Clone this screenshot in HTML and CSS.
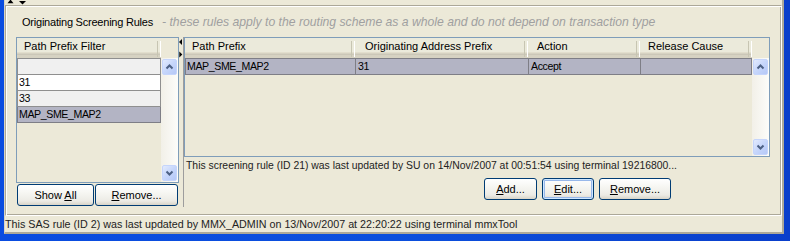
FILE: index.html
```html
<!DOCTYPE html>
<html>
<head>
<meta charset="utf-8">
<link rel="stylesheet" href="styles.css">
</head>
<body>
<div class="window">
  <div class="client">
    <div class="topbar">
      <svg class="toparrows" width="30" height="5" viewBox="0 0 30 5"><polygon points="2.5,3.2 5.5,-0.5 8.5,3.2" fill="#000"/><polygon points="14,1 21,1 17.5,4.6" fill="#000"/></svg>
    </div>
    <div class="panel">
      <div class="title"><span class="title-main">Originating Screening Rules</span><span class="title-note">- these rules apply to the routing scheme as a whole and do not depend on transaction type</span></div>
      <div class="content">
        <div class="left">
          <div class="table table-left">
            <div class="cols">
              <div class="thead"><div class="th c-filter">Path Prefix Filter</div></div>
              <div class="tbody">
                <div class="tr alt"><div class="td c-filter"></div></div>
                <div class="tr"><div class="td c-filter">31</div></div>
                <div class="tr alt"><div class="td c-filter">33</div></div>
                <div class="tr sel"><div class="td c-filter">MAP_SME_MAP2</div></div>
              </div>
            </div>
            <div class="vscroll">
              <div class="corner"></div>
              <div class="track">
                <div class="sbtn"><svg width="13" height="14" viewBox="0 0 13 14"><path d="M3.5 8.5 L6.5 5.5 L9.5 8.5" fill="none" stroke="#4D6185" stroke-width="2"/></svg></div>
                <div class="sfill"></div>
                <div class="sbtn"><svg width="13" height="14" viewBox="0 0 13 14"><path d="M3.5 5.5 L6.5 8.5 L9.5 5.5" fill="none" stroke="#4D6185" stroke-width="2"/></svg></div>
              </div>
            </div>
          </div>
          <div class="btnrow btnrow-left">
            <div class="btn b-showall">Show <u>A</u>ll</div>
            <div class="btn b-lremove"><u>R</u>emove...</div>
          </div>
        </div>
        <div class="splitter">
          <svg width="4" height="170" viewBox="0 0 4 170"><polygon points="3,2 3,8 0,5" fill="#000"/><polygon points="0.3,14.5 0.3,20.5 3.3,17.5" fill="#000"/></svg>
        </div>
        <div class="right">
          <div class="table table-right">
            <div class="cols">
              <div class="thead">
                <div class="th c-path">Path Prefix</div>
                <div class="th c-orig">Originating Address Prefix</div>
                <div class="th c-action">Action</div>
                <div class="th c-cause">Release Cause</div>
              </div>
              <div class="tbody">
                <div class="tr sel">
                  <div class="td c-path">MAP_SME_MAP2</div>
                  <div class="td c-orig">31</div>
                  <div class="td c-action">Accept</div>
                  <div class="td c-cause"></div>
                </div>
              </div>
            </div>
            <div class="vscroll">
              <div class="corner"></div>
              <div class="track">
                <div class="sbtn"><svg width="13" height="14" viewBox="0 0 13 14"><path d="M3.5 8.5 L6.5 5.5 L9.5 8.5" fill="none" stroke="#4D6185" stroke-width="2"/></svg></div>
                <div class="sfill"></div>
                <div class="sbtn"><svg width="13" height="14" viewBox="0 0 13 14"><path d="M3.5 5.5 L6.5 8.5 L9.5 5.5" fill="none" stroke="#4D6185" stroke-width="2"/></svg></div>
              </div>
            </div>
          </div>
          <div class="info">This screening rule (ID 21) was last updated by SU on 14/Nov/2007 at 00:51:54 using terminal 19216800...</div>
          <div class="btnrow btnrow-right">
            <div class="btn b-add"><u>A</u>dd...</div>
            <div class="btn b-edit focus"><u>E</u>dit...</div>
            <div class="btn b-rremove"><u>R</u>emove...</div>
          </div>
        </div>
      </div>
    </div>
    <div class="status">This SAS rule (ID 2) was last updated by MMX_ADMIN on 13/Nov/2007 at 22:20:22 using terminal mmxTool</div>
  </div>
</div>
</body>
</html>
```

FILE: styles.css
```css
* { box-sizing: border-box; }
html, body { margin: 0; padding: 0; }
body {
  width: 790px;
  height: 241px;
  overflow: hidden;
  font-family: "Liberation Sans", Arial, sans-serif;
  font-size: 11px;
  color: #000;
  background: #ECE9D8;
}
.window {
  width: 790px;
  height: 241px;
  display: flex;
  padding: 0 6px 7px 4px;
  background: linear-gradient(to right, #0A4CE0 0%, #0B4FDD 50%, #0A3FCB 100%);
}
.client {
  flex: 1;
  display: flex;
  flex-direction: column;
  background: #ECE9D8;
  border-right: 2px solid #ACA899;
  border-bottom: 2px solid #ACA899;
  border-left: 1px solid #D8D4C4;
}
.topbar {
  height: 5px;
  flex: none;
  overflow: hidden;
}
.toparrows { display: block; margin-left: 0; }
.panel {
  flex: none;
  height: 211px;
  border: 1px solid;
  border-color: #ACA899 #FFFFFF #FFFFFF #ACA899;
  box-shadow: inset 1px 1px 0 #FFFFFF, inset -1px -1px 0 #ACA899;
  padding: 9px 0 0 10px;
  display: flex;
  flex-direction: column;
}
.title {
  height: 14px;
  line-height: 14px;
  margin-bottom: 8px;
  padding-left: 6px;
  white-space: nowrap;
}
.title-main { font-size: 11px; letter-spacing: -0.22px; }
.title-note {
  font-style: italic;
  color: #A0A0A0;
  font-size: 12.2px;
  margin-left: 9px;
}
.content {
  display: flex;
  height: 170px;
}
.left {
  width: 163px;
  display: flex;
  flex-direction: column;
}
.table {
  border: 1px solid #7F9DB9;
  display: flex;
  background: #ECE9D8;
}
.table-left { height: 146px; }
.table-right { height: 120px; width: 586px; }
.cols {
  flex: 1;
  display: flex;
  flex-direction: column;
}
.thead {
  display: flex;
  height: 20px;
  flex: none;
}
.th {
  height: 20px;
  line-height: 17px;
  padding-left: 7px;
  white-space: nowrap;
  background: #EBEADB;
  border-bottom: 3px solid #D6D2C2;
  box-shadow: inset 0 -1px 0 #CBC7B8, inset 0 -2px 0 #D6D2C2, inset 0 -3px 0 #E2DECD;
  position: relative;
}
.th::after {
  content: "";
  position: absolute;
  right: 0;
  top: 3px;
  bottom: -2px;
  width: 2px;
  border-left: 1px solid #C7C5B2;
  border-right: 1px solid #FFFFFF;
}
.tbody { flex: 1; }
.tr {
  display: flex;
  height: 16px;
  background: #FFFFFF;
  border-bottom: 1px solid #8F8F8F;
}
.tr:first-child { height: 17px; border-top: 1px solid #8F8F8F; }
.tr.alt { background: #F0F0F0; }
.tr.sel { background: #B3B4C4; border-color: #7E7E86; }
.td {
  height: 15px;
  line-height: 15px;
  padding-left: 1px;
  white-space: nowrap;
  border-left: 1px solid #8F8F8F;
  font-size: 10.6px;
  letter-spacing: -0.4px;
}
.td:last-child { border-right: 1px solid #8F8F8F; }
.tr.sel .td { border-color: #7E7E86; }
.c-filter { width: 144px; }
.c-path { width: 170px; }
.c-orig { width: 173px; }
.c-action { width: 112px; }
.c-cause { width: 112px; }
.th.c-orig { padding-left: 10px; }
.th.c-action { padding-left: 9px; }
.th.c-cause { padding-left: 8px; }
.td.c-orig, .td.c-action { padding-left: 2px; }
.vscroll {
  width: 17px;
  display: flex;
  flex-direction: column;
  flex: none;
}
.corner { height: 20px; flex: none; background: #ECE9D8; }
.track {
  flex: 1;
  display: flex;
  flex-direction: column;
  padding: 1px 1px 1px 1px;
  background: linear-gradient(to right, #F2F0E8 0%, #F7F6F1 50%, #FDFDFA 100%);
}
.sfill { flex: 1; }
.sbtn {
  width: 15px;
  height: 16px;
  flex: none;
  border: 1px solid #C5D5FC;
  border-radius: 2px;
  background: linear-gradient(135deg, #E2EAFE 0%, #C6D6FB 50%, #B5C8F7 100%);
  display: flex;
  align-items: center;
  justify-content: center;
}
.sbtn svg { display: block; }
.btnrow { display: flex; }
.btnrow-left {
  margin-top: 1px;
  padding-left: 1px;
  gap: 1px;
}
.btnrow-right {
  margin-top: 5px;
  justify-content: flex-end;
  padding-right: 99px;
  gap: 5px;
}
.btn {
  height: 22px;
  line-height: 20px;
  text-align: center;
  border: 1px solid #003C74;
  border-radius: 3px;
  background: linear-gradient(to bottom, #FFFFFF 0%, #F6F6F2 40%, #ECEBE5 80%, #D8D4C8 100%);
  white-space: nowrap;
  font-size: 11px;
}
.btn.focus {
  box-shadow: inset 0 0 0 1px #CEE7FF, inset 0 0 0 2px #98B8EA;
}
.btn u { text-decoration: underline; text-underline-offset: 1px; }
.b-showall { width: 77px; }
.b-lremove { width: 83px; }
.b-add { width: 53px; }
.b-edit { width: 52px; }
.b-rremove { width: 72px; }
.splitter {
  width: 4px;
  flex: none;
}
.splitter svg { display: block; }
.right {
  width: 587px;
  border-left: 1px solid #9D9D9D;
  display: flex;
  flex-direction: column;
}
.info {
  margin-top: 1px;
  height: 15px;
  line-height: 15px;
  padding-left: 2px;
  white-space: nowrap;
  color: #222;
  font-size: 10.4px;
}
.status {
  height: 16px;
  line-height: 17px;
  padding-left: 0;
  white-space: nowrap;
  color: #222;
  flex: none;
  font-size: 10.73px;
}
```
